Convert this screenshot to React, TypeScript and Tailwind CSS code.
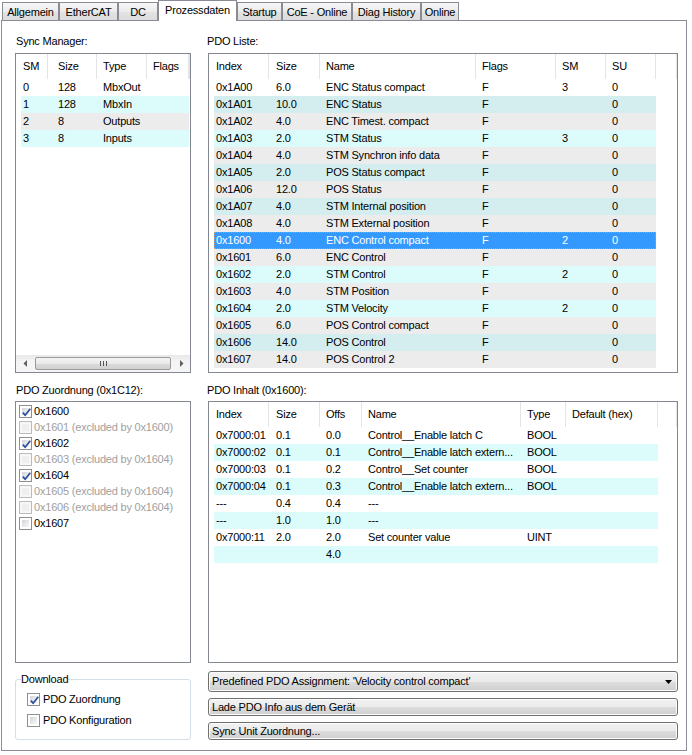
import React from "react";

type RowColor = "white" | "cyan" | "teal" | "gray" | "sel";

const rowBg: Record<RowColor, string> = {
  white: "bg-white",
  cyan: "bg-[#dcfcfc]",
  teal: "bg-[#d4eef0]",
  gray: "bg-[#ececec]",
  sel: "bg-[#3399ff] text-white outline outline-1 outline-dotted -outline-offset-1 outline-[#d8975a]",
};

const syncHead = ["w-[32px] pl-[7px]", "w-[49px] pl-[10px]", "w-[50px] pl-[6px]", "w-[42px] pl-[6px]"];
const syncCols = ["w-[27px] pl-[2px]", "w-[49px] pl-[10px]", "w-[50px] pl-[6px]", "w-[42px] pl-[6px]"];

const pdoHead = ["w-[60px] pl-[7px]", "w-[51px] pl-[7px]", "w-[156px] pl-[6px]", "w-[80px] pl-[6px]", "w-[50px] pl-[6px]", "w-[50px] pl-[6px]"];
const pdoCols = ["w-[55px] pl-[2px]", "w-[51px] pl-[7px]", "w-[156px] pl-[6px]", "w-[80px] pl-[6px]", "w-[50px] pl-[6px]", "w-[50px] pl-[6px]"];

const inhHead = ["w-[60px] pl-[7px]", "w-[51px] pl-[7px]", "w-[42px] pl-[6px]", "w-[159px] pl-[6px]", "w-[45px] pl-[6px]", "w-[92px] pl-[6px]"];
const inhCols = ["w-[55px] pl-[2px]", "w-[51px] pl-[7px]", "w-[42px] pl-[6px]", "w-[159px] pl-[6px]", "w-[45px] pl-[6px]", "w-[92px] pl-[6px]"];

const syncRows: { c: string[]; bg: RowColor }[] = [
  { c: ["0", "128", "MbxOut", ""], bg: "white" },
  { c: ["1", "128", "MbxIn", ""], bg: "cyan" },
  { c: ["2", "8", "Outputs", ""], bg: "gray" },
  { c: ["3", "8", "Inputs", ""], bg: "cyan" },
];

const pdoRows: { c: string[]; bg: RowColor }[] = [
  { c: ["0x1A00", "6.0", "ENC Status compact", "F", "3", "0"], bg: "white" },
  { c: ["0x1A01", "10.0", "ENC Status", "F", "", "0"], bg: "teal" },
  { c: ["0x1A02", "4.0", "ENC Timest. compact", "F", "", "0"], bg: "gray" },
  { c: ["0x1A03", "2.0", "STM Status", "F", "3", "0"], bg: "cyan" },
  { c: ["0x1A04", "4.0", "STM Synchron info data", "F", "", "0"], bg: "gray" },
  { c: ["0x1A05", "2.0", "POS Status compact", "F", "", "0"], bg: "teal" },
  { c: ["0x1A06", "12.0", "POS Status", "F", "", "0"], bg: "gray" },
  { c: ["0x1A07", "4.0", "STM Internal position", "F", "", "0"], bg: "teal" },
  { c: ["0x1A08", "4.0", "STM External position", "F", "", "0"], bg: "gray" },
  { c: ["0x1600", "4.0", "ENC Control compact", "F", "2", "0"], bg: "sel" },
  { c: ["0x1601", "6.0", "ENC Control", "F", "", "0"], bg: "gray" },
  { c: ["0x1602", "2.0", "STM Control", "F", "2", "0"], bg: "cyan" },
  { c: ["0x1603", "4.0", "STM Position", "F", "", "0"], bg: "gray" },
  { c: ["0x1604", "2.0", "STM Velocity", "F", "2", "0"], bg: "cyan" },
  { c: ["0x1605", "6.0", "POS Control compact", "F", "", "0"], bg: "gray" },
  { c: ["0x1606", "14.0", "POS Control", "F", "", "0"], bg: "teal" },
  { c: ["0x1607", "14.0", "POS Control 2", "F", "", "0"], bg: "gray" },
];

const inhRows: { c: string[]; bg: RowColor }[] = [
  { c: ["0x7000:01", "0.1", "0.0", "Control__Enable latch C", "BOOL", ""], bg: "white" },
  { c: ["0x7000:02", "0.1", "0.1", "Control__Enable latch extern...", "BOOL", ""], bg: "cyan" },
  { c: ["0x7000:03", "0.1", "0.2", "Control__Set counter", "BOOL", ""], bg: "white" },
  { c: ["0x7000:04", "0.1", "0.3", "Control__Enable latch extern...", "BOOL", ""], bg: "cyan" },
  { c: ["---", "0.4", "0.4", "---", "", ""], bg: "white" },
  { c: ["---", "1.0", "1.0", "---", "", ""], bg: "cyan" },
  { c: ["0x7000:11", "2.0", "2.0", "Set counter value", "UINT", ""], bg: "white" },
  { c: ["", "", "4.0", "", "", ""], bg: "cyan" },
];

const zuordnung: { t: string; checked: boolean; disabled: boolean }[] = [
  { t: "0x1600", checked: true, disabled: false },
  { t: "0x1601 (excluded by 0x1600)", checked: false, disabled: true },
  { t: "0x1602", checked: true, disabled: false },
  { t: "0x1603 (excluded by 0x1604)", checked: false, disabled: true },
  { t: "0x1604", checked: true, disabled: false },
  { t: "0x1605 (excluded by 0x1604)", checked: false, disabled: true },
  { t: "0x1606 (excluded by 0x1604)", checked: false, disabled: true },
  { t: "0x1607", checked: false, disabled: false },
];

const tabs: { t: string; w: string; sel?: boolean }[] = [
  { t: "Allgemein", w: "w-[57px]" },
  { t: "EtherCAT", w: "w-[59px]" },
  { t: "DC", w: "w-[40px]" },
  { t: "Prozessdaten", w: "w-[79px]", sel: true },
  { t: "Startup", w: "w-[45px]" },
  { t: "CoE - Online", w: "w-[70px]" },
  { t: "Diag History", w: "w-[69px]" },
  { t: "Online", w: "w-[38px]" },
];

function Check({ checked, disabled }: { checked: boolean; disabled: boolean }) {
  return (
    <div
      className={
        "w-[13px] h-[13px] shrink-0 border p-[2px] " +
        (disabled ? "border-[#bcbcbc] bg-[#f7f7f7]" : "border-[#8e8f8f] bg-white")
      }
    >
      <div
        className={
          "relative w-full h-full " +
          (disabled
            ? "bg-[#efefef]"
            : "bg-[linear-gradient(135deg,#d2d4d8_0%,#e6e7e9_50%,#f8f8f8_100%)]")
        }
      >
        {checked && (
          <svg className="absolute -left-[1px] -top-[1px]" width="11" height="11" viewBox="0 0 11 11">
            <path d="M1.8 5.6 L4.2 8.2 L9.3 1.8" fill="none" stroke="#2b4d9e" strokeWidth="1.7" />
          </svg>
        )}
      </div>
    </div>
  );
}

function Header({ heads, labels }: { heads: string[]; labels: string[] }) {
  return (
    <div className="h-[25px] flex shrink-0 bg-white">
      {heads.map((h, i) => (
        <div key={i} className={h + " shrink-0 flex items-center border-r border-[#e3e4e6] whitespace-nowrap overflow-hidden"}>
          {labels[i]}
        </div>
      ))}
      <div className="flex-1 border-r border-[#e3e4e6]" />
    </div>
  );
}

function Rows({ cols, rows }: { cols: string[]; rows: { c: string[]; bg: RowColor }[] }) {
  return (
    <div className="ml-[5px] flex flex-col">
      {rows.map((r, i) => (
        <div key={i} className={"h-[17px] flex w-max " + rowBg[r.bg]}>
          {r.c.map((c, j) => (
            <div key={j} className={cols[j] + " shrink-0 flex items-center whitespace-nowrap overflow-hidden"}>
              {c}
            </div>
          ))}
        </div>
      ))}
    </div>
  );
}

function WinButton({ children, arrow, h }: { children: React.ReactNode; arrow?: boolean; h: string }) {
  return (
    <div
      className={
        h +
        " w-full flex items-center pl-[3px] pr-[5px] border border-[#707070] rounded-[3px] bg-[linear-gradient(to_bottom,#f2f2f2_0%,#ebebeb_50%,#dddddd_51%,#cfcfcf_100%)] shadow-[inset_0_0_0_1px_#fcfcfc]"
      }
    >
      <span className="flex-1 whitespace-nowrap">{children}</span>
      {arrow && (
        <svg width="7" height="4" viewBox="0 0 7 4">
          <path d="M0 0 L7 0 L3.5 4 Z" fill="#000" />
        </svg>
      )}
    </div>
  );
}

function HScroll() {
  return (
    <div className="h-[17px] shrink-0 flex items-center bg-[linear-gradient(to_bottom,#e8e8e8,#f5f5f5_40%,#f5f5f5)]">
      <div className="w-[17px] h-full flex items-center justify-center">
        <svg width="4" height="7" viewBox="0 0 4 7">
          <path d="M4 0 L4 7 L0.5 3.5 Z" fill="#606060" />
        </svg>
      </div>
      <div className="flex-1 mx-[2px] h-[13px] rounded-[2px] border border-[#9a9a9a] bg-[linear-gradient(to_bottom,#f4f4f4,#e9e9e9_50%,#dadada_51%,#d2d2d2)] flex items-center justify-center gap-[2px]">
        <div className="w-[1px] h-[5px] bg-[#555]" />
        <div className="w-[1px] h-[5px] bg-[#555]" />
        <div className="w-[1px] h-[5px] bg-[#555]" />
      </div>
      <div className="w-[17px] h-full flex items-center justify-center">
        <svg width="4" height="7" viewBox="0 0 4 7">
          <path d="M0 0 L0 7 L3.5 3.5 Z" fill="#606060" />
        </svg>
      </div>
    </div>
  );
}

export default function App() {
  return (
    <div className="w-[692px] h-[755px] bg-white text-black text-[11px] leading-[13px] tracking-[-0.2px] font-['Liberation_Sans',Arial,sans-serif] overflow-hidden">
      {/* tab strip */}
      <div className="h-[20px] flex items-end pl-[2px]">
        {tabs.map((t, i) =>
          t.sel ? (
            <div
              key={i}
              className={t.w + " h-[21px] -mb-[1px] relative z-10 bg-white border-l border-t border-r border-[#898c95] flex justify-center items-center pb-[2px] shrink-0"}
            >
              {t.t}
            </div>
          ) : (
            <div
              key={i}
              className={t.w + " h-[18px] border-l border-t border-r border-[#898c95] bg-[linear-gradient(to_bottom,#f7f7f7,#ebebeb_50%,#e3e3e3_51%,#dcdcdc)] flex justify-center items-center pt-[2px] shrink-0"}
            >
              {t.t}
            </div>
          )
        )}
      </div>

      {/* panel */}
      <div className="ml-[1px] w-[686px] h-[731px] border border-[#898c95] bg-white flex pl-[13px] gap-[17px]">
        {/* left column */}
        <div className="w-[176px] flex flex-col shrink-0">
          <div className="h-[32px] pt-[14px] shrink-0 pl-[1px]">Sync Manager:</div>
          <div className="h-[320px] shrink-0 border border-[#828790] flex flex-col overflow-hidden">
            <Header heads={syncHead} labels={["SM", "Size", "Type", "Flags"]} />
            <Rows cols={syncCols} rows={syncRows} />
            <div className="flex-1" />
            <HScroll />
          </div>
          <div className="h-[28px] pt-[11px] shrink-0 pl-[1px]">PDO Zuordnung (0x1C12):</div>
          <div className="h-[262px] shrink-0 border border-[#828790] flex flex-col pt-[1px] pl-[3px]">
            {zuordnung.map((z, i) => (
              <div key={i} className="h-[16px] flex items-center gap-[1px]">
                <Check checked={z.checked} disabled={z.disabled} />
                <span className={"pl-[1px] " + (z.disabled ? "text-[#a0a0a0]" : "text-black")}>{z.t}</span>
              </div>
            ))}
          </div>
          <fieldset className="mt-[10px] h-[67px] border border-[#d5dfe5] rounded-[3px] pl-[5px]">
            <legend className="px-0">Download</legend>
            <div className="mt-[5px] ml-[6px] flex flex-col gap-[5px]">
              <div className="h-[16px] flex items-center gap-[3px]">
                <Check checked={true} disabled={false} />
                <span>PDO Zuordnung</span>
              </div>
              <div className="h-[16px] flex items-center gap-[3px]">
                <Check checked={false} disabled={false} />
                <span>PDO Konfiguration</span>
              </div>
            </div>
          </fieldset>
        </div>

        {/* right column */}
        <div className="w-[470px] flex flex-col shrink-0">
          <div className="h-[32px] pt-[14px] shrink-0 -ml-[1px]">PDO Liste:</div>
          <div className="h-[320px] shrink-0 border border-[#828790] flex flex-col overflow-hidden">
            <Header heads={pdoHead} labels={["Index", "Size", "Name", "Flags", "SM", "SU"]} />
            <Rows cols={pdoCols} rows={pdoRows} />
          </div>
          <div className="h-[28px] pt-[11px] shrink-0 -ml-[1px]">PDO Inhalt (0x1600):</div>
          <div className="h-[262px] shrink-0 border border-[#828790] flex flex-col overflow-hidden">
            <Header heads={inhHead} labels={["Index", "Size", "Offs", "Name", "Type", "Default (hex)"]} />
            <Rows cols={inhCols} rows={inhRows} />
          </div>
          <div className="mt-[8px] flex flex-col gap-[6px]">
            <WinButton h="h-[21px]" arrow>
              Predefined PDO Assignment: 'Velocity control compact'
            </WinButton>
            <WinButton h="h-[18px]">Lade PDO Info aus dem Gerät</WinButton>
            <WinButton h="h-[18px]">Sync Unit Zuordnung...</WinButton>
          </div>
        </div>
      </div>
    </div>
  );
}
